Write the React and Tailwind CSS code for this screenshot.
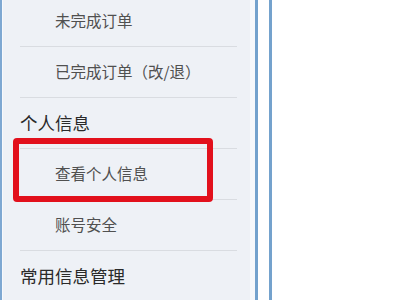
import React from "react";

const rows = [
  { t: "未完成订单", sub: true },
  { t: "已完成订单（改/退）", sub: true },
  { t: "个人信息", sub: false },
  { t: "查看个人信息", sub: true },
  { t: "账号安全", sub: true },
  { t: "常用信息管理", sub: false, last: true },
];

export default function App() {
  return (
    <div
      className="relative w-[400px] h-[300px] overflow-hidden bg-white flex"
      style={{ fontFamily: '"Noto Sans CJK SC", "Noto Sans", sans-serif' }}
    >
      <div className="w-[2px] bg-[#7ea8d2]" />
      <div className="w-[1px] bg-[#f7f9fc]" />
      <div className="w-[247px] bg-[#eef1f6] pl-[17px] pr-[13px]">
        <div className="-mt-[4px] flex flex-col">
          {rows.map((r, i) => (
            <div
              key={i}
              className={`h-[51px] flex items-center ${
                r.last ? "" : "border-b border-[#d9dce1]"
              } ${
                r.sub
                  ? "pl-[35px] text-[15.5px] text-[#505050]"
                  : "text-[17.5px] text-[#2a2a2a]"
              }`}
            >
              {r.t}
            </div>
          ))}
        </div>
      </div>
      <div className="w-[5px] bg-[#f6f8fb]" />
      <div className="w-[3px] bg-[#74a2cd]" />
      <div className="w-[11px] bg-white" />
      <div className="w-[3px] bg-[#74a2cd]" />
      <div className="flex-1 bg-white" />
      <div className="absolute left-[13px] top-[138px] w-[200px] h-[64px] border-[6px] border-[#e2101c] rounded-[4px]" />
    </div>
  );
}
